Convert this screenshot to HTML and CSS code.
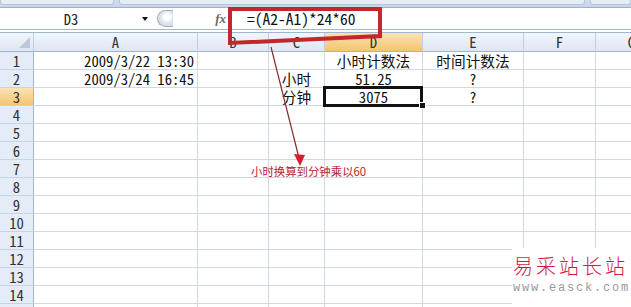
FILE: index.html
```html
<!DOCTYPE html>
<html lang="zh-CN">
<head>
    <meta charset="UTF-8">
    <title>时间计数法</title>
    <link rel="stylesheet" href="styles.css">
</head>
<body>
    <div class="window">
        <div class="ribbon-edge">
            <span class="panel p1"></span>
            <span class="panel p2"></span>
            <span class="panel p3"></span>
        </div>

        <div class="formula-bar">
            <div class="name-box">
                <span class="cell-ref">D3</span>
                <span class="drop"></span>
            </div>
            <div class="bar-tools">
                <span class="grip"></span>
                <span class="fx">fx</span>
            </div>
            <div class="formula">=(A2-A1)*24*60</div>
        </div>

        <table class="sheet">
            <colgroup>
                <col class="w-head">
                <col class="w-a">
                <col class="w-b">
                <col class="w-c">
                <col class="w-d">
                <col class="w-e">
                <col class="w-f">
                <col class="w-g">
            </colgroup>
            <tr class="col-heads">
                <th class="corner"><span class="tri"></span></th>
                <th>A</th><th>B</th><th>C</th><th class="sel">D</th><th>E</th><th>F</th><th>G</th>
            </tr>
            <tr>
                <th>1</th>
                <td class="right">2009/3/22 13:30</td><td></td><td></td>
                <td class="mid">小时计数法</td><td class="mid">时间计数法</td><td></td><td></td>
            </tr>
            <tr>
                <th>2</th>
                <td class="right">2009/3/24 16:45</td><td></td><td class="mid">小时</td>
                <td class="mid">51.25</td><td class="mid">?</td><td></td><td></td>
            </tr>
            <tr>
                <th class="sel">3</th>
                <td></td><td></td><td class="mid">分钟</td>
                <td class="mid active">3075</td><td class="mid">?</td><td></td><td></td>
            </tr>
            <tr><th>4</th><td></td><td></td><td></td><td></td><td></td><td></td><td></td></tr>
            <tr><th>5</th><td></td><td></td><td></td><td></td><td></td><td></td><td></td></tr>
            <tr><th>6</th><td></td><td></td><td></td><td></td><td></td><td></td><td></td></tr>
            <tr><th>7</th><td></td><td></td><td></td><td></td><td></td><td></td><td></td></tr>
            <tr><th>8</th><td></td><td></td><td></td><td></td><td></td><td></td><td></td></tr>
            <tr><th>9</th><td></td><td></td><td></td><td></td><td></td><td></td><td></td></tr>
            <tr><th>10</th><td></td><td></td><td></td><td></td><td></td><td></td><td></td></tr>
            <tr><th>11</th><td></td><td></td><td></td><td></td><td></td><td></td><td></td></tr>
            <tr><th>12</th><td></td><td></td><td></td><td></td><td></td><td></td><td></td></tr>
            <tr><th>13</th><td></td><td></td><td></td><td></td><td></td><td></td><td></td></tr>
            <tr><th>14</th><td></td><td></td><td></td><td></td><td></td><td></td><td></td></tr>
            <tr><th>15</th><td></td><td></td><td></td><td></td><td></td><td></td><td></td></tr>
        </table>

        <!-- 标注：红框和箭头 -->
        <svg class="marks" width="631" height="307" viewBox="0 0 631 307">
            <polygon points="230,9 380,9 380,36 230,43" fill="none" stroke="#c4262d" stroke-width="4"/>
            <line x1="271" y1="47" x2="299" y2="158" stroke="#8a2b2b" stroke-width="1.2"/>
            <polygon points="294,154 305,155 300,166" fill="#d3202c"/>
        </svg>
        <div class="note">小时换算到分钟乘以60</div>

        <div class="watermark">
            <div class="wm-name">易采站长站</div>
            <div class="wm-url">www.easck.com</div>
        </div>
    </div>
</body>
</html>
```

FILE: styles.css
```css
body { margin: 0; font-family: "Noto Sans CJK SC", sans-serif; }

.window {
    position: relative;
    width: 631px;
    height: 307px;
    overflow: hidden;
    background: #fff;
}

/* ribbon bottom edge */
.ribbon-edge {
    height: 8px;
    display: flex;
    gap: 5px;
    background: linear-gradient(#d3deed, #c6d5e8);
    border-bottom: 1px solid #9fb2c9;
    box-sizing: border-box;
}
.panel {
    height: 4px;
    background: #e7edf5;
    border: 1px solid #b6c6da;
    border-top: 0;
    border-radius: 0 0 3px 3px;
}
.p1 { width: 112px; }
.p2 { width: 464px; }
.p3 { flex: 1; }

/* formula bar */
.formula-bar {
    height: 21px;
    display: flex;
    background: #fff;
    border-bottom: 1px solid #a7b7cb;
}
.name-box {
    width: 157px;
    display: flex;
    align-items: center;
    font-size: 14.5px;
    color: #222;
    font-feature-settings: "hwid" 1;
}
.cell-ref { width: 142px; text-align: center; }
.drop {
    width: 0;
    height: 0;
    border-left: 3px solid transparent;
    border-right: 3px solid transparent;
    border-top: 4px solid #111;
}
.bar-tools {
    width: 73px;
    display: flex;
    align-items: center;
    justify-content: space-between;
    padding-right: 4px;
    box-sizing: border-box;
}
.grip {
    width: 16px;
    height: 17px;
    border: 1px solid #a3adbb;
    border-right: 0;
    border-radius: 9px 0 0 9px;
    background: radial-gradient(circle at 9px 6px, #ffffff 3px, #e1e6ee 6px, #c9d1dc);
    box-sizing: border-box;
}
.fx {
    font-family: "Liberation Serif", serif;
    font-style: italic;
    font-weight: bold;
    font-size: 13px;
    color: #6a6a6a;
}
.formula {
    flex: 1;
    border-left: 1px solid #a7b7cb;
    padding-left: 16px;
    font-size: 15.5px;
    line-height: 21px;
    color: #111;
    font-feature-settings: "hwid" 1;
}

/* sheet grid */
.sheet {
    margin-top: 2px;
    width: 668px;
    table-layout: fixed;
    border-collapse: separate;
    border-spacing: 0;
    border-top: 1px solid #9eb6ce;
    font-size: 14.67px;
    font-feature-settings: "hwid" 1;
    color: #111;
}
.w-head { width: 34px; }
.w-a { width: 164px; }
.w-b { width: 71px; }
.w-c { width: 56px; }
.w-d { width: 98px; }
.w-e { width: 101px; }
.w-f { width: 72px; }
.w-g { width: 72px; }

.sheet td,
.sheet th {
    height: 17px;
    padding: 0 3px;
    line-height: 17px;
    white-space: nowrap;
    vertical-align: bottom;
    font-weight: normal;
}
.sheet td {
    border-right: 1px solid #d0d7e5;
    border-bottom: 1px solid #d0d7e5;
}
.sheet th {
    background: #e4ecf7;
    color: #333;
    text-align: center;
    border-right: 1px solid #9eb6ce;
    border-bottom: 1px solid #c7d4e4;
}
.col-heads th {
    height: 18px;
    line-height: 18px;
    background: linear-gradient(#f2f6fb, #dde6f2);
    border-right: 1px solid #c1cedd;
    border-bottom: 1px solid #9eb6ce;
}
.sheet th.sel,
.col-heads th.sel {
    background: linear-gradient(#fbe3b4, #f3c56f);
}
.corner { position: relative; }
.tri {
    position: absolute;
    right: 3px;
    bottom: 3px;
    width: 0;
    height: 0;
    border-left: 11px solid transparent;
    border-bottom: 11px solid #b9c9dc;
}

.right { text-align: right; }
.mid { text-align: center; }

.active { position: relative; }
.active::after {
    content: "";
    position: absolute;
    top: -2px;
    left: -2px;
    right: -1px;
    bottom: -2px;
    border: 3px solid #111;
}
.active::before {
    content: "";
    position: absolute;
    right: -4px;
    bottom: -4px;
    width: 5px;
    height: 5px;
    background: #111;
    border: 1px solid #fff;
    z-index: 1;
}

/* annotations */
.marks {
    position: absolute;
    left: 0;
    top: 0;
    pointer-events: none;
}
.note {
    position: absolute;
    left: 251px;
    top: 163px;
    font-size: 11.4px;
    color: #b8232a;
}

.watermark {
    position: absolute;
    right: 0;
    bottom: 0;
    width: 119px;
    height: 59px;
    background: #fff;
    padding: 5px 0 0 1px;
    box-sizing: border-box;
}
.wm-name {
    font-size: 20px;
    line-height: 26px;
    font-weight: 300;
    letter-spacing: 3px;
    white-space: nowrap;
    color: #d11a42;
}
.wm-url {
    font-family: "Liberation Mono", monospace;
    font-size: 12px;
    letter-spacing: 1.8px;
    white-space: nowrap;
    color: #9a9a9a;
    margin-top: 2px;
}
```
